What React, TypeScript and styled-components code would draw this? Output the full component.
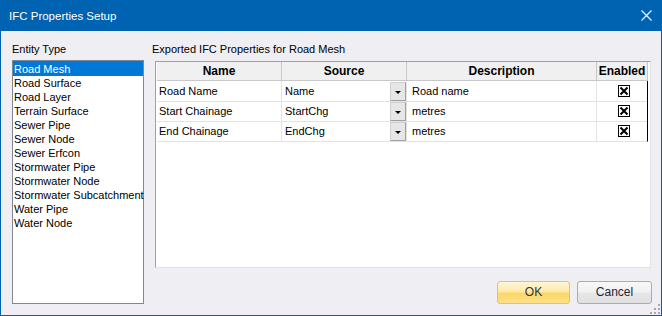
import React from "react"
import styled, { createGlobalStyle } from "styled-components"

const GlobalStyle = createGlobalStyle`
    html, body {
        margin: 0;
        padding: 0;
        background: #EFEEF3;
    }
    * {
        box-sizing: border-box;
    }
`

const Window = styled.div`
    width: 662px;
    height: 316px;
    border: 1px solid #0063B1;
    border-top: none;
    background: #EFEEF3;
    display: flex;
    flex-direction: column;
    font-family: "Liberation Sans", Arial, sans-serif;
    font-size: 11px;
    color: #000;
    overflow: hidden;
`

const TitleBar = styled.div`
    height: 31px;
    margin: 0 -1px;
    background: #0063B1;
    color: #fff;
    display: flex;
    align-items: center;
    justify-content: space-between;
    padding: 0 10px 0 9px;
    font-size: 11.5px;
`

const Title = styled.span`
    line-height: 14px;
    margin-top: 1px;
`

const Content = styled.div`
    flex: 1;
    display: flex;
    gap: 11px;
    padding: 11px 10px 0 11px;
`

const LeftPane = styled.div`
    width: 132px;
    display: flex;
    flex-direction: column;
`

const RightPane = styled.div`
    flex: 1;
    display: flex;
    flex-direction: column;
`

const Label = styled.div<{ shift?: number }>`
    line-height: 14px;
    height: 14px;
    margin-left: ${({ shift }) => shift || 0}px;
`

const ListBox = styled.div`
    margin-top: 4px;
    height: 244px;
    border: 1px solid #828790;
    background: #fff;
    padding-top: 0px;
`

const ListItem = styled.div<{ selected?: boolean }>`
    height: 14px;
    line-height: 14px;
    margin-top: ${({ selected }) => selected ? 0 : 0}px;
    padding-left: 1px;
    white-space: nowrap;
    background: ${({ selected }) => selected ? '#0078D7' : 'transparent'};
    color: ${({ selected }) => selected ? '#fff' : '#000'};
    &:first-child {
        height: 15px;
        line-height: 16px;
    }
`

const Grid = styled.div`
    margin-top: 5px;
    height: 207px;
    border-top: 1px solid #A0A0A0;
    border-left: 1px solid #A0A0A0;
    border-right: 1px solid #E3E3E3;
    border-bottom: 1px solid #E3E3E3;
    background: #fff;
    padding-left: 1px;
`

const Row = styled.div<{ header?: boolean }>`
    display: grid;
    grid-template-columns: 125px 125px 190px 51px;
    height: ${({ header }) => header ? 19 : 20}px;
`

const HeadCell = styled.div`
    background: #F0F0F0;
    border-right: 1px solid #C8C8C8;
    border-bottom: 1px solid #C8C8C8;
    font-weight: bold;
    font-size: 12px;
    line-height: 18px;
    text-align: center;
    white-space: nowrap;
    overflow: hidden;
`

const Cell = styled.div<{ pad?: number, last?: boolean }>`
    border-right: 1px solid ${({ last }) => last ? '#000' : '#E3E3E3'};
    border-bottom: 1px solid #E3E3E3;
    line-height: 19px;
    padding-left: ${({ pad }) => pad || 2}px;
    display: flex;
    align-items: center;
    justify-content: ${({ last }) => last ? 'center' : 'space-between'};
    white-space: nowrap;
`

const DropButton = styled.div`
    width: 16px;
    height: 19px;
    background: #E6E6E6;
    border: 1px solid #D0D0D0;
    border-right-color: #A0A0A0;
    border-bottom-color: #A0A0A0;
    display: flex;
    align-items: center;
    justify-content: center;
    margin-top: 1px;
`

const Arrow = styled.div`
    width: 0;
    height: 0;
    border-left: 3px solid transparent;
    border-right: 3px solid transparent;
    border-top: 3px solid #000;
    margin-top: 2px;
`

const CheckBox = styled.div`
    width: 12px;
    height: 12px;
    border: 1px solid #000;
    background: #fff;
    display: flex;
    align-items: center;
    justify-content: center;
    margin-left: 1px;
`

const Footer = styled.div`
    display: flex;
    justify-content: flex-end;
    gap: 7px;
    margin-top: 13px;
    margin-right: -1px;
`

const Button = styled.div<{ primary?: boolean }>`
    width: ${({ primary }) => primary ? 73 : 75}px;
    height: 23px;
    border-radius: 3px;
    border: 1px solid ${({ primary }) => primary ? '#E5C365' : '#ACACAC'};
    background: ${({ primary }) => primary ?
        'linear-gradient(180deg, #FFF6D8 0%, #FEEAA8 45%, #FBD766 55%, #FDE08A 100%)' :
        'linear-gradient(180deg, #F8F8F8 0%, #F1F1F1 45%, #E6E6E6 55%, #E0E0E0 100%)'};
    color: ${({ primary }) => primary ? '#333' : '#1E1E3C'};
    font-size: 12px;
    line-height: 21px;
    text-align: center;
`

const Grip = styled.svg`
    position: absolute;
    right: 2px;
    bottom: 2px;
`

const Frame = styled.div`
    position: relative;
    width: 662px;
    height: 316px;
`

const entityTypes = [
    "Road Mesh",
    "Road Surface",
    "Road Layer",
    "Terrain Surface",
    "Sewer Pipe",
    "Sewer Node",
    "Sewer Erfcon",
    "Stormwater Pipe",
    "Stormwater Node",
    "Stormwater Subcatchment",
    "Water Pipe",
    "Water Node",
]

const properties = [
    { name: "Road Name", source: "Name", description: "Road name" },
    { name: "Start Chainage", source: "StartChg", description: "metres" },
    { name: "End Chainage", source: "EndChg", description: "metres" },
]

const CloseIcon = () => (
    <svg width="11" height="11" viewBox="0 0 11 11">
        <path d="M0.5 0.5 L10.5 10.5 M10.5 0.5 L0.5 10.5" stroke="#fff" strokeWidth="1.1" />
    </svg>
)

const CheckMark = () => (
    <svg width="10" height="10" viewBox="0 0 10 10">
        <path d="M1.5 1.5 L8.5 8.5 M8.5 1.5 L1.5 8.5" stroke="#000" strokeWidth="2" />
    </svg>
)

const App: React.FC = () => {
    return (
        <Frame>
            <GlobalStyle />
            <Window>
                <TitleBar>
                    <Title>IFC Properties Setup</Title>
                    <CloseIcon />
                </TitleBar>
                <Content>
                    <LeftPane>
                        <Label>Entity Type</Label>
                        <ListBox>
                            {entityTypes.map((t, i) => (
                                <ListItem key={t} selected={i === 0}>{t}</ListItem>
                            ))}
                        </ListBox>
                    </LeftPane>
                    <RightPane>
                        <Label shift={-3}>Exported IFC Properties for Road Mesh</Label>
                        <Grid>
                            <Row header>
                                <HeadCell>Name</HeadCell>
                                <HeadCell>Source</HeadCell>
                                <HeadCell>Description</HeadCell>
                                <HeadCell>Enabled</HeadCell>
                            </Row>
                            {properties.map((p) => (
                                <Row key={p.name}>
                                    <Cell pad={2}>{p.name}</Cell>
                                    <Cell pad={3}>
                                        {p.source}
                                        <DropButton><Arrow /></DropButton>
                                    </Cell>
                                    <Cell pad={5}>{p.description}</Cell>
                                    <Cell last><CheckBox><CheckMark /></CheckBox></Cell>
                                </Row>
                            ))}
                        </Grid>
                        <Footer>
                            <Button primary>OK</Button>
                            <Button>Cancel</Button>
                        </Footer>
                    </RightPane>
                </Content>
            </Window>
            <Grip width="10" height="10" viewBox="0 0 10 10">
                <rect x="8" y="0" width="2" height="2" fill="#A8A8A8" />
                <rect x="4" y="4" width="2" height="2" fill="#A8A8A8" />
                <rect x="8" y="4" width="2" height="2" fill="#A8A8A8" />
                <rect x="0" y="8" width="2" height="2" fill="#A8A8A8" />
                <rect x="4" y="8" width="2" height="2" fill="#A8A8A8" />
                <rect x="8" y="8" width="2" height="2" fill="#A8A8A8" />
            </Grip>
        </Frame>
    )
}

export default App
